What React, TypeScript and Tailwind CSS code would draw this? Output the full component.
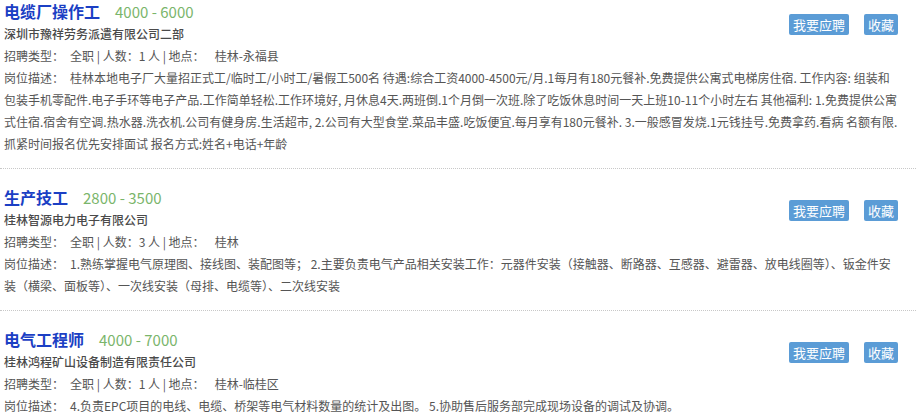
const jobs = [
  {
    title: "电缆厂操作工",
    salary: "4000 - 6000",
    company: "深圳市豫祥劳务派遣有限公司二部",
    count: "1",
    place: "桂林-永福县",
    desc: "桂林本地电子厂大量招正式工/临时工/小时工/暑假工500名 待遇:综合工资4000-4500元/月.1每月有180元餐补.免费提供公寓式电梯房住宿. 工作内容: 组装和包装手机零配件.电子手环等电子产品.工作简单轻松.工作环境好, 月休息4天.两班倒.1个月倒一次班.除了吃饭休息时间一天上班10-11个小时左右 其他福利: 1.免费提供公寓式住宿.宿舍有空调.热水器.洗衣机.公司有健身房.生活超市, 2.公司有大型食堂.菜品丰盛.吃饭便宜.每月享有180元餐补. 3.一般感冒发烧.1元钱挂号.免费拿药.看病 名额有限.抓紧时间报名优先安排面试 报名方式:姓名+电话+年龄",
  },
  {
    title: "生产技工",
    salary: "2800 - 3500",
    company: "桂林智源电力电子有限公司",
    count: "3",
    place: "桂林",
    desc: "1.熟练掌握电气原理图、接线图、装配图等； 2.主要负责电气产品相关安装工作：元器件安装（接触器、断路器、互感器、避雷器、放电线圈等）、钣金件安装（横梁、面板等）、一次线安装（母排、电缆等）、二次线安装",
  },
  {
    title: "电气工程师",
    salary: "4000 - 7000",
    company: "桂林鸿程矿山设备制造有限责任公司",
    count: "1",
    place: "桂林-临桂区",
    desc: "4.负责EPC项目的电线、电缆、桥架等电气材料数量的统计及出图。 5.协助售后服务部完成现场设备的调试及协调。",
  },
];

export default function App() {
  return (
    <div className="w-[916px] h-[414px] overflow-hidden bg-white font-['Microsoft_YaHei','Noto_Sans_CJK_SC',sans-serif]">
      <div className="-mt-[17px]">
        {jobs.map((job, i) => (
          <div
            key={i}
            className={`relative pl-[4px] pr-[16px] pt-[16px] pb-[13px] ${
              i > 0 ? "border-t border-dotted border-[#c8c8c8]" : ""
            }`}
          >
            <div className="flex items-baseline h-[24px] leading-[24px]">
              <span className="text-[16px] font-bold text-[#1b3fc4]">{job.title}</span>
              <span className="ml-[15px] text-[15px] text-[#7ab56b]">{job.salary}</span>
            </div>
            <div className="absolute right-[18px] top-[31px] flex gap-[15px]">
              <button className="h-[21px] px-[4px] rounded-[2px] bg-[#5b9cd6] text-white text-[13px] leading-[21px]">
                我要应聘
              </button>
              <button className="h-[21px] px-[4px] rounded-[2px] bg-[#5b9cd6] text-white text-[13px] leading-[21px]">
                收藏
              </button>
            </div>
            <div className="text-[12px] leading-[22px] text-[#555]">
              <div className="font-medium text-[#4a4a4a]">{job.company}</div>
              <div>
                <span>招聘类型：</span>
                <span className="ml-[6px]">全职 | 人数：{job.count} 人 | 地点：</span>
                <span className="ml-[10px]">{job.place}</span>
              </div>
              <div className="pr-[2px]">
                <span>岗位描述：</span>
                <span className="ml-[6px]">{job.desc}</span>
              </div>
            </div>
          </div>
        ))}
      </div>
    </div>
  );
}
